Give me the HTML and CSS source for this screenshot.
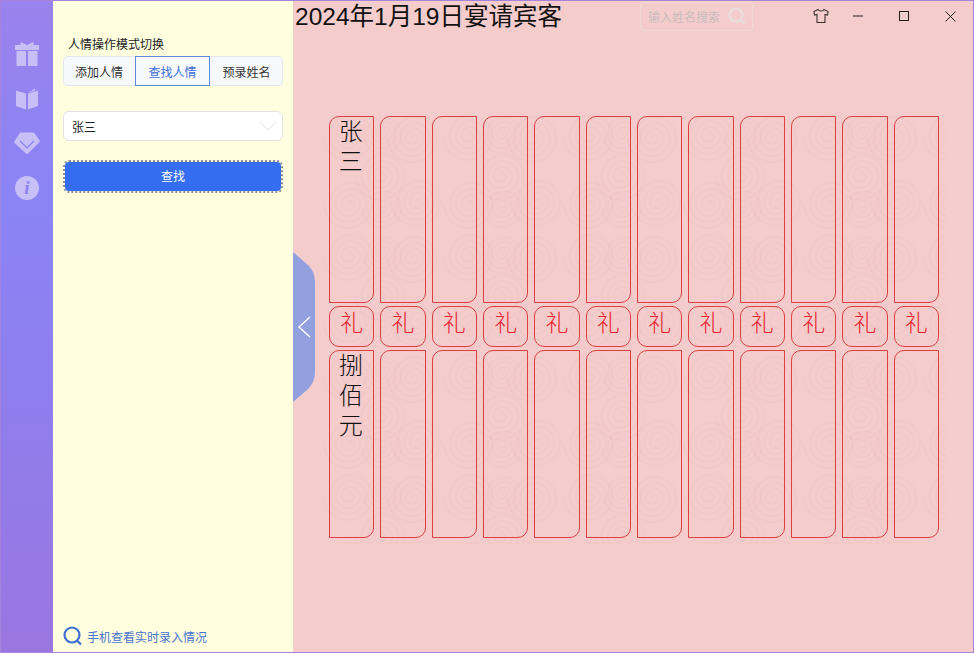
FILE: index.html
```html
<!DOCTYPE html>
<html lang="zh-CN">
<head>
    <meta charset="UTF-8">
    <title>礼簿</title>
    <link rel="stylesheet" href="styles.css">
</head>
<body>
    <div class="window">
      <nav class="sidebar">
        <svg class="nav-icon" viewBox="0 0 24 24"><path d="M0 3h24v5H0zM1.500 9h9.500v15H1.500zM13 9h9.500v15H13zM5 3l1-3 6 3 6-3 1 3z"/></svg>
        <svg class="nav-icon" viewBox="0 0 24 24"><path d="M1 3.500l10 3V22.500L1 19zM23 3.500L13 6.500V22.500L23 19zM13.500 5.500L20 1.500v2z"/></svg>
        <svg class="nav-icon wide" viewBox="0 0 26 24"><path d="M7 .5h12q1 0 1.500 .7l5 7q.7 1 0 1.800L14 21.500q-1 1-2 0L.5 11q-.7-.8 0-1.800l5-7.700Q6 .5 7 .5z"/><path d="M6 9l7 7 7-7" fill="none" stroke="#8a83f5" stroke-width="1.200"/></svg>
        <div class="info-icon"><i>i</i></div>
      </nav>

      <aside class="panel">
        <div class="panel-label">人情操作模式切换</div>
        <div class="mode-switch">
          <div class="mode-item">添加人情</div>
          <div class="mode-item active">查找人情</div>
          <div class="mode-item">预录姓名</div>
        </div>
        <div class="name-select">
          <span>张三</span>
          <svg width="18" height="10" viewBox="0 0 18 10"><path d="M1 1l8 8 8-8" fill="none" stroke="#dcdfe6" stroke-width="1"/></svg>
        </div>
        <button class="find-button">查找</button>
        <div class="phone-link">
          <svg width="20" height="20" viewBox="0 0 20 20"><circle cx="9" cy="9" r="7.500" fill="none" stroke="#3f6fd0" stroke-width="2.200"/><path d="M14.500 15l3.500 3.500" stroke="#3f6fd0" stroke-width="2.200"/></svg>
          <span>手机查看实时录入情况</span>
        </div>
      </aside>

      <main class="main">
        <div class="collapse-handle">
          <svg width="22" height="150" viewBox="0 0 22 150"><path d="M0 0L15 13Q22 20 22 30V120Q22 130 15 137L0 150z" fill="#93a0e0"/><path d="M17 65L6 75l11 10" fill="none" stroke="#fff" stroke-width="1.400"/></svg>
        </div>
        <header class="top-bar">
          <h1 class="title">2024年1月19日宴请宾客</h1>
          <div class="search-box">
            <span>输入姓名搜索</span>
            <svg width="18" height="18" viewBox="0 0 18 18"><circle cx="8" cy="8" r="6.500" fill="none" stroke="#e8dcdc" stroke-width="2.500"/><path d="M13 13l3.500 3.500" stroke="#e8dcdc" stroke-width="2.500"/></svg>
          </div>
          <svg class="shirt" width="16" height="16" viewBox="0 0 16 16"><path d="M5 1.500L1 3.500 1.500 7l2.500-.500V14.500h8V6.500L14.500 7 15 3.500 11 1.500C10 3.500 6 3.500 5 1.500z" fill="none" stroke="#3d3232" stroke-width="1.100"/></svg>
          <div class="win-button first"><svg width="10" height="10" viewBox="0 0 10 10"><path d="M0 5h10" stroke="#222" stroke-width="1"/></svg></div>
          <div class="win-button"><svg width="10" height="10" viewBox="0 0 10 10"><rect x=".5" y=".5" width="9" height="9" fill="none" stroke="#222" stroke-width="1"/></svg></div>
          <div class="win-button"><svg width="11" height="11" viewBox="0 0 11 11"><path d="M.5.500l10 10M10.500.500l-10 10" stroke="#222" stroke-width="1"/></svg></div>
        </header>

        <div class="book">
          <div class="cell name-top">张三</div>
          <div class="cell name-top"></div>
          <div class="cell name-top"></div>
          <div class="cell name-top"></div>
          <div class="cell name-top"></div>
          <div class="cell name-top"></div>
          <div class="cell name-top"></div>
          <div class="cell name-top"></div>
          <div class="cell name-top"></div>
          <div class="cell name-top"></div>
          <div class="cell name-top"></div>
          <div class="cell name-top"></div>

          <div class="cell gift">礼</div>
          <div class="cell gift">礼</div>
          <div class="cell gift">礼</div>
          <div class="cell gift">礼</div>
          <div class="cell gift">礼</div>
          <div class="cell gift">礼</div>
          <div class="cell gift">礼</div>
          <div class="cell gift">礼</div>
          <div class="cell gift">礼</div>
          <div class="cell gift">礼</div>
          <div class="cell gift">礼</div>
          <div class="cell gift">礼</div>

          <div class="cell name-top">捌佰元</div>
          <div class="cell name-top"></div>
          <div class="cell name-top"></div>
          <div class="cell name-top"></div>
          <div class="cell name-top"></div>
          <div class="cell name-top"></div>
          <div class="cell name-top"></div>
          <div class="cell name-top"></div>
          <div class="cell name-top"></div>
          <div class="cell name-top"></div>
          <div class="cell name-top"></div>
          <div class="cell name-top"></div>
        </div>
      </main>
    </div>
</body>
</html>
```
FILE: styles.css
```css
* {
  box-sizing: border-box;
}
body {
  margin: 0;
  font-family: "Liberation Sans", "Noto Sans CJK SC", sans-serif;
}
.window {
  display: flex;
  width: 974px;
  height: 653px;
  border: 1px solid #a582dc;
  background: #f4cccc;
  overflow: hidden;
}
.sidebar {
  width: 52px;
  flex-shrink: 0;
  display: flex;
  flex-direction: column;
  align-items: center;
  gap: 21px;
  padding-top: 41px;
  background: linear-gradient(180deg, #9b82ec 0%, #8a84f6 30%, #8f7eee 60%, #9a76e0 100%);
}
.nav-icon {
  width: 24px;
  height: 24px;
  flex-shrink: 0;
  fill: #c7bff5;
}
.nav-icon.wide {
  width: 26px;
}
.info-icon {
  width: 24px;
  height: 24px;
  margin-top: -1px;
  border-radius: 50%;
  background: #c7bff5;
  color: #8f82ee;
  font: italic bold 19px/24px "Liberation Serif", serif;
  text-align: center;
}
.panel {
  width: 240px;
  flex-shrink: 0;
  display: flex;
  flex-direction: column;
  padding: 36px 10px 6px;
  background: #ffffdf;
  font-size: 12px;
}
.panel-label {
  line-height: 16px;
  padding-left: 5px;
  margin-bottom: 3px;
  color: #222;
}
.mode-switch {
  display: grid;
  grid-template-columns: 72px 75px 1fr;
  height: 30px;
  background: #f7f8fa;
  border-radius: 5px;
  box-shadow: inset 0 0 0 1px #e4e7ed;
}
.mode-item {
  display: flex;
  align-items: center;
  justify-content: center;
  color: #333;
}
.mode-item.active {
  border: 1px solid #5b8bd6;
  color: #3a6fd8;
}
.name-select {
  display: flex;
  align-items: center;
  justify-content: space-between;
  height: 30px;
  margin-top: 25px;
  padding: 0 5px 0 8px;
  background: #fff;
  border: 1px solid #e0e2e6;
  border-radius: 6px;
  color: #222;
}
.find-button {
  height: 33px;
  margin-top: 19px;
  padding: 0 0 2px;
  background: #346df0;
  background-clip: padding-box;
  border: 2px dotted #8a8f9c;
  border-radius: 6px;
  color: #fff;
  font: inherit;
}
.phone-link {
  display: flex;
  align-items: center;
  gap: 4px;
  margin-top: auto;
  color: #4a74d0;
}
.main {
  position: relative;
  flex: 1;
  display: flex;
  flex-direction: column;
}
.collapse-handle {
  position: absolute;
  left: 0;
  top: 251px;
  line-height: 0;
}
.top-bar {
  display: flex;
  align-items: center;
  height: 30px;
  padding-left: 2px;
}
.title {
  margin: 0;
  padding-top: 2px;
  width: 345px;
  font-size: 24.500px;
  font-weight: 400;
  line-height: 30px;
  white-space: nowrap;
  color: #111;
}
.search-box {
  display: flex;
  align-items: center;
  justify-content: space-between;
  width: 113px;
  height: 29px;
  padding: 0 6px 0 7px;
  border: 1px solid #f0d8d8;
  border-radius: 4px;
  font-size: 12px;
  color: #c9bdbd;
}
.shirt {
  margin-left: 60px;
}
.win-button {
  width: 46px;
  display: flex;
  justify-content: center;
  line-height: 0;
}
.win-button.first {
  margin-left: 6px;
}
.book {
  display: grid;
  grid-template-columns: repeat(12, minmax(0, 1fr));
  grid-template-rows: 187px 41px 188px;
  gap: 3px 6px;
  width: 624px;
  margin: 79px 0 0 29px;
  padding: 6px 7px;
  background-image: url("data:image/svg+xml,%3Csvg xmlns='http://www.w3.org/2000/svg' xmlns:xlink='http://www.w3.org/1999/xlink' width='120' height='120'%3E%3Cdefs%3E%3Cpath id='s' d='M0 0a3 3 0 0 1 6 0a6 6 0 0 1-12 0a9 9 0 0 1 18 0a12 12 0 0 1-24 0a15 15 0 0 1 30 0a18 18 0 0 1-36 0a21 21 0 0 1 42 0a24 24 0 0 1-48 0' fill='none' stroke='%23c06060' stroke-opacity='.04' stroke-width='2'/%3E%3C/defs%3E%3Cuse xlink:href='%23s' x='26' y='26'/%3E%3Cuse xlink:href='%23s' x='90' y='28'/%3E%3Cuse xlink:href='%23s' x='58' y='66'/%3E%3Cuse xlink:href='%23s' x='26' y='94'/%3E%3Cuse xlink:href='%23s' x='94' y='92'/%3E%3Cuse xlink:href='%23s' transform='translate(60 24) scale(.8)'/%3E%3Cuse xlink:href='%23s' transform='translate(60 98) scale(.8)'/%3E%3C/svg%3E");
}
.cell {
  border: 1px solid #dc4040;
}
.name-top {
  border-radius: 10px 0 10px 0;
  padding: 2px 0 0 0;
  writing-mode: vertical-rl;
  text-orientation: upright;
  font-size: 24px;
  font-weight: 300;
  letter-spacing: 6px;
  line-height: 49px;
  color: #111;
}
.gift {
  display: flex;
  align-items: center;
  justify-content: center;
  padding-bottom: 12px;
  border-radius: 10px;
  font-size: 23px;
  font-weight: 300;
  color: #e8202c;
}
```
